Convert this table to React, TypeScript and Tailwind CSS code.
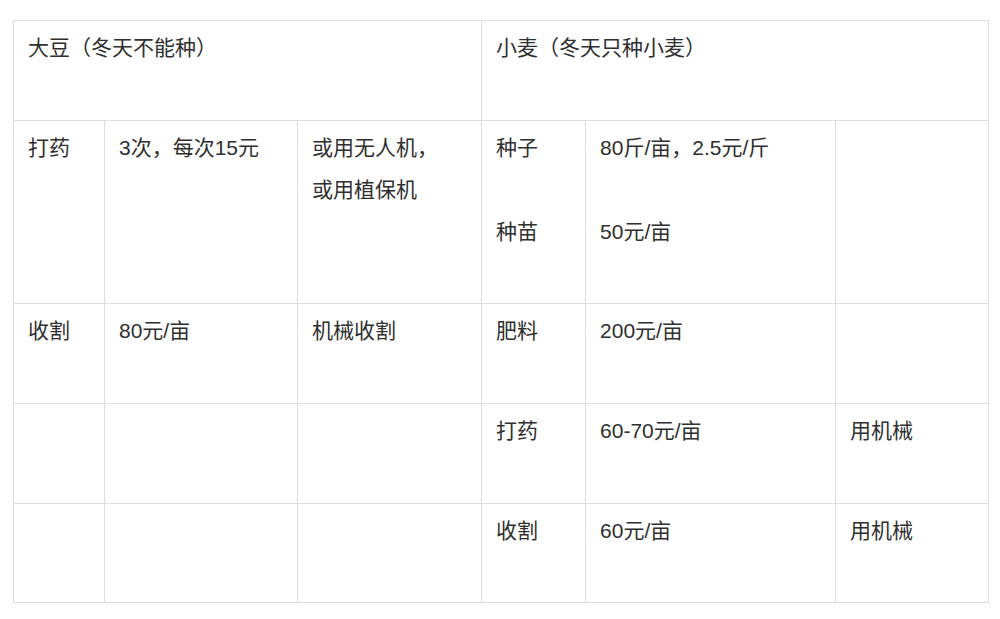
const rows: { h: string; cells: { text: string[]; span?: number }[] }[] = [
  {
    h: "h-[100px]",
    cells: [
      { text: ["大豆（冬天不能种）"], span: 3 },
      { text: ["小麦（冬天只种小麦）"], span: 3 },
    ],
  },
  {
    h: "h-[183px]",
    cells: [
      { text: ["打药"] },
      { text: ["3次，每次15元"] },
      { text: ["或用无人机，", "或用植保机"] },
      { text: ["种子", "", "种苗"] },
      { text: ["80斤/亩，2.5元/斤", "", "50元/亩"] },
      { text: [""] },
    ],
  },
  {
    h: "h-[100px]",
    cells: [
      { text: ["收割"] },
      { text: ["80元/亩"] },
      { text: ["机械收割"] },
      { text: ["肥料"] },
      { text: ["200元/亩"] },
      { text: [""] },
    ],
  },
  {
    h: "h-[100px]",
    cells: [
      { text: [""] },
      { text: [""] },
      { text: [""] },
      { text: ["打药"] },
      { text: ["60-70元/亩"] },
      { text: ["用机械"] },
    ],
  },
  {
    h: "h-[99px]",
    cells: [
      { text: [""] },
      { text: [""] },
      { text: [""] },
      { text: ["收割"] },
      { text: ["60元/亩"] },
      { text: ["用机械"] },
    ],
  },
];

export default function App() {
  return (
    <div
      className="w-[1000px] h-[619px] bg-white pt-[20px] pl-[13px]"
      style={{ fontFamily: '"Liberation Sans", "Noto Sans CJK SC", sans-serif' }}
    >
      <table className="border-collapse table-fixed w-[976px] text-[21px] leading-[42px] text-[#2f2f2f]">
        <colgroup>
          <col className="w-[91px]" />
          <col className="w-[193px]" />
          <col className="w-[184px]" />
          <col className="w-[104px]" />
          <col className="w-[250px]" />
          <col className="w-[153px]" />
        </colgroup>
        <tbody>
          {rows.map((row, i) => (
            <tr key={i} className={row.h}>
              {row.cells.map((c, j) => (
                <td
                  key={j}
                  colSpan={c.span}
                  className="border border-[#dedede] align-top pt-[6px] px-[14px]"
                >
                  {c.text.map((t, k) => (
                    <div key={k} className="h-[42px] whitespace-nowrap">
                      {t}
                    </div>
                  ))}
                </td>
              ))}
            </tr>
          ))}
        </tbody>
      </table>
    </div>
  );
}
